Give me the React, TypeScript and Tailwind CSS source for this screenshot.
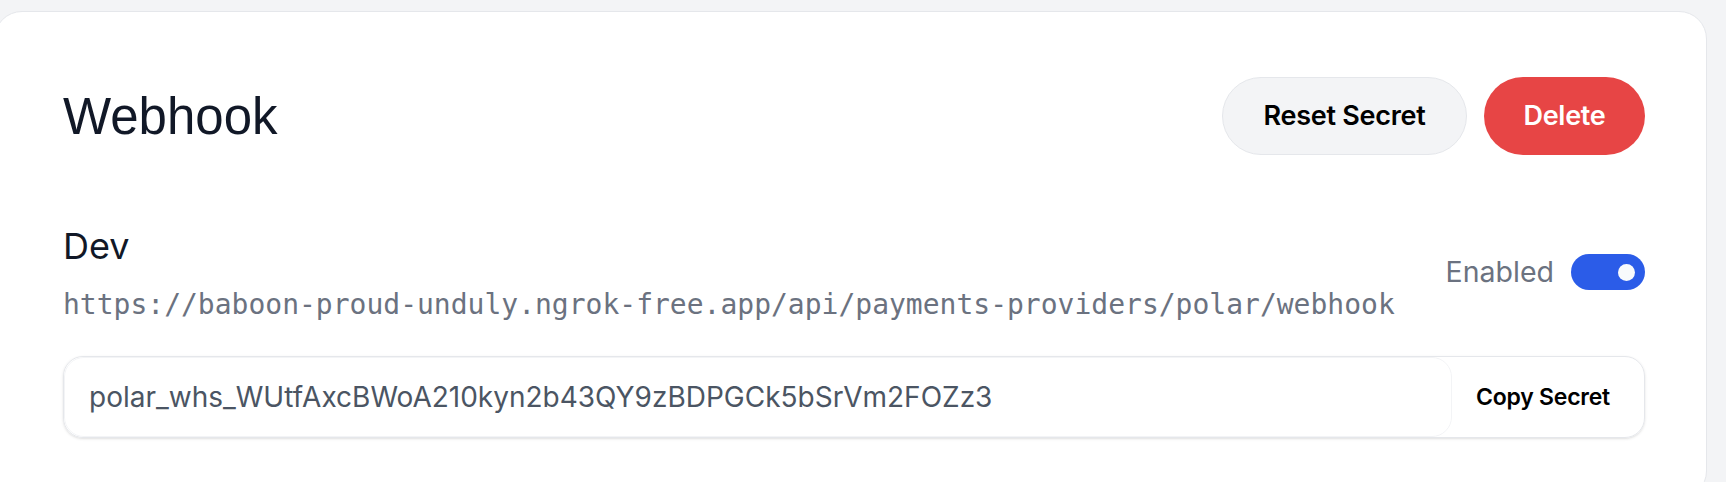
import React from "react";

export default function App() {
  return (
    <div className="min-h-screen overflow-hidden bg-[#f3f4f6] pt-[11px]" style={{ fontFamily: "Inter, 'Noto Sans', sans-serif" }}>
      <div className="-ml-[6px] w-[1713px] rounded-[28px] border border-[#e5e7eb] bg-white pl-[68px] pr-[61px] pt-[65px] pb-[60px]">
        <div className="flex h-[78px] items-center justify-between">
          <h1 className="text-[51px] font-normal leading-none text-[#111827]" style={{ fontFamily: "'Liberation Sans', Arial, sans-serif" }}>
            Webhook
          </h1>
          <div className="flex items-center gap-[17px]">
            <button className="h-[78px] w-[245px] rounded-full border border-[#e5e7eb] bg-[#f3f4f6] text-[27px] font-semibold tracking-[-0.01em] text-black">
              Reset Secret
            </button>
            <button className="h-[78px] w-[161px] rounded-full bg-[#e74545] text-[27px] font-semibold tracking-[-0.01em] text-white">
              Delete
            </button>
          </div>
        </div>

        <div className="mt-[69px] flex items-start justify-between">
          <div>
            <div className="text-[36px] leading-[44px] text-[#111827]">Dev</div>
            <div
              className="mt-[19px] text-[28px] leading-[36px] text-[#6b7280]"
              style={{ fontFamily: "'DejaVu Sans Mono', 'Liberation Mono', monospace" }}
            >
              https://baboon-proud-unduly.ngrok-free.app/api/payments-providers/polar/webhook
            </div>
          </div>
          <div className="mt-[30px] flex items-center gap-[17px]">
            <span className="text-[28.5px] leading-[36px] text-[#6b7280]">Enabled</span>
            <div className="flex h-[36px] w-[74px] items-center justify-end rounded-full bg-[#2b5ce8] pr-[10px]">
              <div className="h-[17px] w-[17px] rounded-full bg-[#f8fafc]" />
            </div>
          </div>
        </div>

        <div className="mt-[33px] flex h-[82px] overflow-hidden rounded-[20px] border border-[#e5e7eb] shadow-sm">
          <div className="flex flex-1 items-center rounded-[20px] border border-[#f3f4f6] pl-[24px] text-[28px] text-[#4b5563]">
            polar_whs_WUtfAxcBWoA210kyn2b43QY9zBDPGCk5bSrVm2FOZz3
          </div>
          <button className="flex w-[192px] items-center pl-[24px] text-[23px] font-semibold tracking-[-0.01em] text-black">
            Copy Secret
          </button>
        </div>
      </div>
    </div>
  );
}
